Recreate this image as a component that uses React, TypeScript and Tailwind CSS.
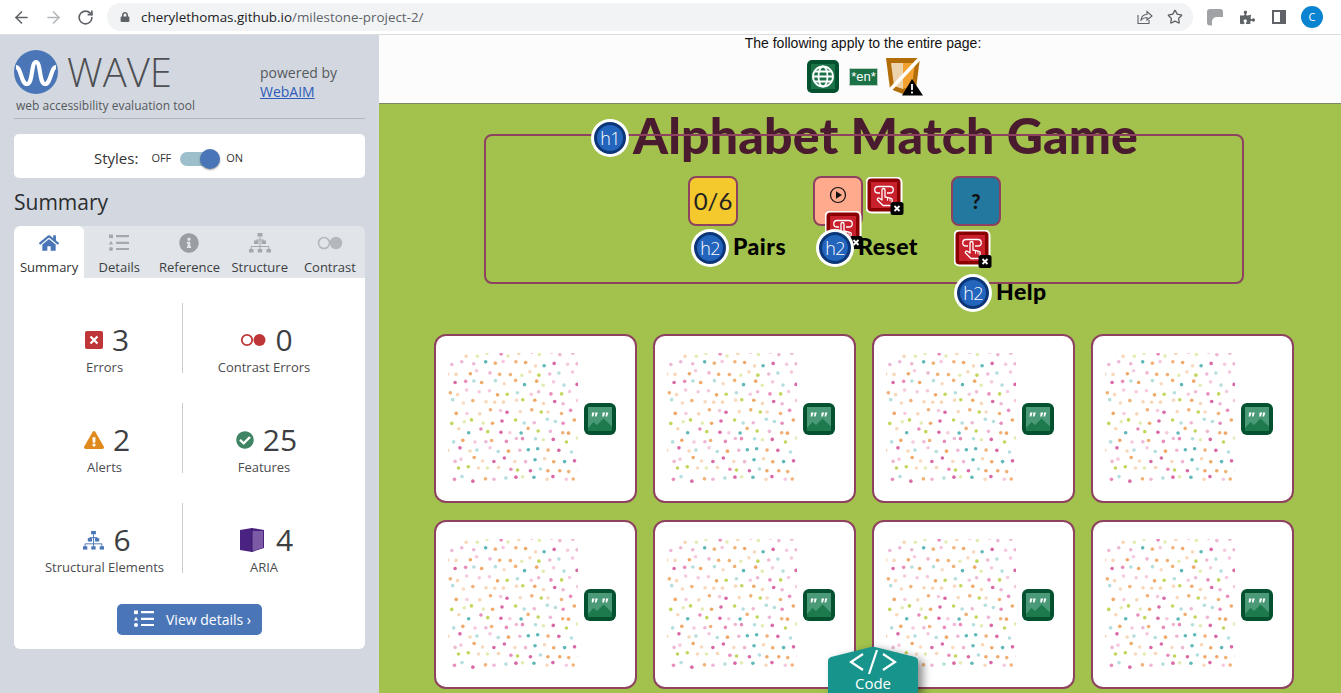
import React from 'react';
import { ArrowLeft, ArrowRight, RotateCw, Star } from 'lucide-react';
import { FaHome, FaInfoCircle, FaCheckCircle, FaExclamationTriangle, FaLock, FaPuzzlePiece } from 'react-icons/fa';

const dotColors = ['#d6569c', '#ee9f58', '#4fb0b0', '#bcd24a', '#e67fb5', '#f0a868'];

// fixed seed so every card gets the same speckle tile
const makeDots = () => {
  let seed = 987;
  const rand = () => {
    seed = (seed * 1103515245 + 12345) & 0x7fffffff;
    return seed / 0x7fffffff;
  };
  const dots: { x: number; y: number; c: string; o: number }[] = [];
  for (let row = 0; row < 14; row++) {
    for (let col = 0; col < 14; col++) {
      dots.push({
        x: col * 10.2 + (row % 2 ? 5.1 : 0) + rand() * 5 - 2.5,
        y: row * 9.6 + rand() * 5 - 1.5,
        c: dotColors[Math.floor(rand() * dotColors.length)],
        o: rand() > 0.55 ? 0.9 : 0.42,
      });
    }
  }
  return dots;
};
const dots = makeDots();

const Speckles = () => (
  <svg width="130" height="131" viewBox="0 0 130 131" className="shrink-0">
    {dots.map((d, i) => (
      <circle key={i} cx={d.x} cy={d.y} r="1.8" fill={d.c} opacity={d.o} />
    ))}
  </svg>
);

const ImageIcon = () => (
  <svg width="32" height="32" viewBox="0 0 32 32" className="shrink-0">
    <rect width="32" height="32" rx="6" fill="#04512f" />
    <rect x="4" y="4" width="24" height="24" fill="#4a9a78" />
    <path d="M4 25 L9.5 19 L13 22 L19.5 15.5 L28 23.5 V28 H4 Z" fill="#1d7a4c" />
    <path d="M8 9.5 h2.6 l-1.3 4 h-1.6 z M11.4 9.5 h2.4 l-1.3 4 h-1.5 z M18.6 9.5 h2.6 l-1.3 4 h-1.6 z M22 9.5 h2.4 l-1.3 4 h-1.5 z" fill="#fff" />
  </svg>
);

const ButtonIcon = ({ x = true }: { x?: boolean }) => (
  <svg width="38" height="38" viewBox="0 0 38 38" className="shrink-0">
    <rect x="0.5" y="0.5" width="35" height="35" rx="5" fill="#8a0000" stroke="#fff" strokeWidth="2" />
    <rect x="5" y="5" width="26" height="26" fill="#c8202c" />
    {/* stadium with the pointing hand in front of it */}
    <path d="M14 16 H12 A3.2 3.2 0 0 1 12 9.5 H24 A3.2 3.2 0 0 1 24 16 H21" fill="none" stroke="#fff" strokeWidth="1.3" />
    <path d="M16 13 a1.5 1.5 0 0 1 3 0 V20 l6 1.4 a1.5 1.5 0 0 1 1.2 1.6 l-0.7 5.5 H17 L11.5 23 a1.3 1.3 0 0 1 1.9-1.7 L16 23 Z" fill="#c8202c" stroke="#fff" strokeWidth="1.3" strokeLinejoin="round" />
    <path d="M21.5 20.8 v3 M24 21.3 v3" stroke="#fff" strokeWidth="0.9" />
    {x && (
      <g>
        <rect x="24.5" y="25" width="13" height="13" rx="2.5" fill="#000" />
        <path d="M28.5 29 l5 5 M33.5 29 l-5 5" stroke="#fff" strokeWidth="1.8" />
      </g>
    )}
  </svg>
);

const Badge = ({ label }: { label: string }) => (
  <div className="relative z-10 flex h-[38px] w-[38px] shrink-0 items-center justify-center rounded-full bg-white">
    <div className="flex h-[32px] w-[32px] items-center justify-center rounded-full border-[3px] border-[#0c3677] bg-[#2364bd] font-['Open_Sans',sans-serif] text-[18px] leading-none font-light tracking-[-0.8px] text-white">
      {label}
    </div>
  </div>
);

const Section = ({ label }: { label: string }) => (
  <div className="flex items-center gap-[4px]">
    <Badge label="h2" />
    <h2 className="mb-[4px] font-['Lato',sans-serif] text-[23px] leading-none font-black tracking-[0.5px] text-black">{label}</h2>
  </div>
);

const squareClass =
  "flex h-[50px] w-[50px] items-center justify-center rounded-[8px] border-2 border-[#8f4260]";

const DetailsGlyph = ({ color }: { color: string }) => (
  <svg width="20" height="18" viewBox="0 0 20 18">
    <rect x="0" y="0.5" width="4" height="3.6" fill={color} />
    <path d="M2 6.8 L4.2 10.6 H-0.2 Z" fill={color} />
    <circle cx="2" cy="15" r="2" fill={color} />
    <path d="M7 2.2 H20 M7 8.8 H20 M7 15 H20" stroke={color} strokeWidth="2.2" />
  </svg>
);

const TreeGlyph = ({ color, size = 22 }: { color: string; size?: number }) => (
  <svg width={size} height={size} viewBox="0 0 22 20">
    <rect x="8.5" y="0" width="5" height="3.5" fill={color} />
    <rect x="5" y="7.5" width="4.5" height="3.5" fill={color} />
    <rect x="12.5" y="7.5" width="4.5" height="3.5" fill={color} />
    <rect x="0" y="16" width="4.5" height="3.5" fill={color} />
    <rect x="8.7" y="16" width="4.5" height="3.5" fill={color} />
    <rect x="17.5" y="16" width="4.5" height="3.5" fill={color} />
    <path d="M11 3.5 V16 M7.2 11 V7 H14.8 V11 M2.2 16 V13.5 H19.8 V16" fill="none" stroke={color} strokeWidth="1" />
  </svg>
);

const tabs = [
  { label: 'Summary', icon: <FaHome size={20} color="#4a76b8" />, active: true },
  { label: 'Details', icon: <DetailsGlyph color="#a5a9ae" /> },
  { label: 'Reference', icon: <FaInfoCircle size={20} color="#9a9ea3" /> },
  { label: 'Structure', icon: <TreeGlyph color="#a5a9ae" /> },
  {
    label: 'Contrast',
    icon: (
      <svg width="26" height="14" viewBox="0 0 26 14">
        <circle cx="7" cy="7" r="5.5" fill="none" stroke="#b4b7bb" strokeWidth="1.6" />
        <circle cx="19" cy="7" r="6.2" fill="#b4b7bb" />
      </svg>
    ),
  },
];

const stats = [
  {
    value: '3',
    label: 'Errors',
    icon: (
      <svg width="18" height="18" viewBox="0 0 18 18">
        <rect width="18" height="18" rx="2" fill="#bf3638" />
        <path d="M5.5 5.5 l7 7 M12.5 5.5 l-7 7" stroke="#fff" strokeWidth="2.2" />
      </svg>
    ),
  },
  {
    value: '0',
    label: 'Contrast Errors',
    icon: (
      <svg width="26" height="14" viewBox="0 0 26 14">
        <circle cx="7" cy="7" r="5.2" fill="none" stroke="#bf3638" strokeWidth="1.8" />
        <circle cx="19.5" cy="7" r="6" fill="#bf3638" />
      </svg>
    ),
  },
  { value: '2', label: 'Alerts', icon: <FaExclamationTriangle size={20} color="#e08a1e" /> },
  { value: '25', label: 'Features', icon: <FaCheckCircle size={18} color="#3f8463" /> },
  { value: '6', label: 'Structural Elements', icon: <TreeGlyph color="#4a76b8" size={21} /> },
  {
    value: '4',
    label: 'ARIA',
    icon: (
      <svg width="24" height="24" viewBox="0 0 24 24" className="mr-[3px]">
        <path d="M0 2 L12 0 L24 2 V20 L12 24 L0 22 Z" fill="#4a2380" />
        <path d="M12 3 H23 V20 L12 23 Z" fill="#7c5aa6" />
        <path d="M12 0 V24" stroke="#3a1a68" strokeWidth="1" />
      </svg>
    ),
  },
];

const Toolbar = () => (
  <div className="flex h-[35px] items-center border-b border-[#dadce0] bg-white pl-[5px]">
    <div className="flex w-[32px] justify-center"><ArrowLeft size={19} color="#5f6368" /></div>
    <div className="flex w-[32px] justify-center"><ArrowRight size={19} color="#b4b7ba" /></div>
    <div className="flex w-[32px] justify-center"><RotateCw size={17} color="#5f6368" strokeWidth={2.4} /></div>
    <div className="ml-[6px] flex h-[28px] w-[1086px] items-center rounded-full bg-[#f1f3f4] pl-[13px] pr-[10px] font-['Open_Sans',sans-serif] text-[13.4px]">
      <FaLock size={10} color="#5f6368" />
      <span className="ml-[11px] text-[#202124]">
        cherylethomas.github.io<span className="text-[#5f6368]">/milestone-project-2/</span>
      </span>
      <svg width="18" height="18" viewBox="0 0 18 18" fill="none" stroke="#5f6368" strokeWidth="1.1" className="ml-auto mr-[14px]">
        <path d="M3 7 V15.5 H14 V12" />
        <path d="M6 12 C6.5 8.5 9 6.5 12 6.5 V3.5 L17 8 L12 12 V9.5 C9.5 9.5 7.5 10.5 6 12 Z" />
      </svg>
      <Star size={16} color="#5f6368" strokeWidth={2} />
    </div>
    <div className="ml-[6px] flex w-[32px] justify-center">
      <svg width="16" height="17" viewBox="0 0 16 17">
        <path d="M3 0 H13 Q16 0 16 3 V8 H10 Q6 8 5 12 V16.5 H3 Q0 16.5 0 13.5 V3 Q0 0 3 0 Z" fill="#a0a2a5" />
      </svg>
    </div>
    <div className="flex w-[32px] justify-center"><FaPuzzlePiece size={15} color="#5f6368" /></div>
    <div className="flex w-[32px] justify-center">
      <div className="flex h-[14px] w-[14px] justify-end border-2 border-[#5f6368]">
        <div className="h-full w-[4px] bg-[#5f6368]" />
      </div>
    </div>
    <div className="flex w-[34px] justify-center">
      <div className="flex h-[22px] w-[22px] items-center justify-center rounded-full bg-[#0a84d0] font-['Open_Sans',sans-serif] text-[11px] text-white">
        C
      </div>
    </div>
  </div>
);

const Sidebar = () => (
  <aside className="h-full w-[379px] shrink-0 bg-[#d3d8e0] px-[14px] pt-[15px] font-['Open_Sans',sans-serif]">
    <div className="flex h-[69px] items-start border-b border-[#b1b5bd]">
      <div className="w-[246px]">
        <div className="flex items-center">
          <svg width="44" height="44" viewBox="0 0 44 44">
            <circle cx="22" cy="22" r="22" fill="#4a76b8" />
            <path d="M2 17 C7 17 7 34 13 34 C19 34 17 12 22 12 C27 12 25 34 31 34 C37 34 37 17 42 17" fill="none" stroke="#fff" strokeWidth="4.2" />
          </svg>
          <span className="ml-[9px] text-[40px] leading-[44px] font-light text-[#4d4f53]">WAVE</span>
        </div>
        <div className="mt-[3px] ml-[2px] text-[12px] leading-[18px] whitespace-nowrap text-[#55585c]">web accessibility evaluation tool</div>
      </div>
      <div className="pt-[13px] text-[14px] leading-[19px] text-[#55585c]">
        powered by
        <br />
        <span className="text-[#2d5bb9] underline">WebAIM</span>
      </div>
    </div>
    <div className="mt-[15px] flex h-[44px] items-center rounded-[5px] bg-white pt-[5px] pl-[80px]">
      <span className="text-[15px] text-[#333]">Styles:</span>
      <span className="ml-[13px] text-[11px] text-[#333]">OFF</span>
      <div className="relative ml-[9px] h-[14px] w-[30px] rounded-full bg-[#9dbfcc]">
        <div className="absolute top-[-3px] right-[-10px] h-[20px] w-[20px] rounded-full bg-[#4a76b8] shadow-[0_1px_2px_rgba(0,0,0,0.4)]" />
      </div>
      <span className="ml-[16px] text-[11px] text-[#333]">ON</span>
    </div>
    <h2 className="mt-[9px] text-[21px] leading-[30px] text-[#2b2d30]">Summary</h2>
    <div className="mt-[9px] grid grid-cols-5 overflow-hidden rounded-t-[6px] bg-[#e1e4e9]">
      {tabs.map((t) => (
        <div
          key={t.label}
          className={
            t.active
              ? 'flex h-[52px] flex-col items-center rounded-t-[6px] bg-white pt-[7px] text-[13px] text-[#333]'
              : 'flex h-[52px] flex-col items-center pt-[7px] text-[13px] text-[#3b3e42]'
          }
        >
          <div className="flex h-[20px] items-center">{t.icon}</div>
          <div className="mt-[5px] leading-[18px]">{t.label}</div>
        </div>
      ))}
    </div>
    <div className="h-[371px] rounded-b-[6px] bg-white pt-[25px] pl-[13px]">
      <div className="grid grid-cols-[156px_162px] gap-y-[30px]">
        {stats.map((s, i) => (
          <div
            key={s.label}
            className={
              i % 2 === 0
                ? 'flex h-[70px] flex-col items-center border-r border-[#c9cbce] pt-[22px]'
                : 'flex h-[70px] flex-col items-center pt-[22px]'
            }
          >
            <div className="flex h-[36px] items-center gap-[9px] pl-[5px] text-[30px] leading-none text-[#3d3f43]">
              {s.icon}
              <span>{s.value}</span>
            </div>
            <div className="mt-[3px] whitespace-nowrap text-[13px] leading-[18px] text-[#4a4c50]">{s.label}</div>
          </div>
        ))}
      </div>
      <div className="mt-[31px] ml-[90px] flex h-[31px] w-[145px] items-center rounded-[5px] bg-[#4a76b8] pb-[1px] pl-[17px] text-[14px] text-white">
        <DetailsGlyph color="#fff" />
        <span className="ml-[12px]">View details ›</span>
      </div>
    </div>
  </aside>
);

const Card = () => (
  <div className="flex h-[169px] items-center gap-[6px] rounded-[12px] border-2 border-[#8f4260] bg-white pl-3">
    <Speckles />
    <ImageIcon />
  </div>
);

const App: React.FC = () => {
  return (
    <div className="flex h-[693px] w-[1341px] flex-col overflow-hidden">
      <Toolbar />
      <div className="relative flex min-h-0 flex-1">
        <Sidebar />
        <main className="min-w-0 flex-1 bg-[#a2c14d]">
          <div className="flex h-[69px] flex-col items-center border-b border-[#7d8a6a] bg-[#fcfcfc] pl-[6px]">
            <div className="-mt-[1px] font-['Liberation_Sans',sans-serif] text-[14px] leading-[18px] text-[#111]">The following apply to the entire page:</div>
            <div className="mt-[5px] ml-[4px] flex items-center">
              <svg width="32" height="33" viewBox="0 0 32 33">
                <rect width="32" height="33" rx="5" fill="#04512f" />
                <rect x="4" y="4" width="24" height="25" fill="#1c7247" />
                <g fill="none" stroke="#fff" strokeWidth="1.8">
                  <circle cx="16" cy="16.5" r="10" />
                  <ellipse cx="16" cy="16.5" rx="4.5" ry="10" />
                  <path d="M6 16.5 H26 M7.5 11.5 H24.5 M7.5 21.5 H24.5" />
                </g>
              </svg>
              <div className="ml-[10px] flex h-[18px] w-[29px] items-center justify-center border border-[#bcd0c4] bg-[#1c7247] font-['Liberation_Sans',sans-serif] text-[13px] leading-none text-white">
                *en*
              </div>
              <svg width="38" height="39" viewBox="0 0 38 39" className="ml-[7px]">
                <path d="M1 1 H35 L31 32 L18 37 L5 32 Z" fill="#b36d08" />
                <path d="M6 6 H18 V32 L9 29 Z" fill="#ecd2ad" />
                <path d="M18 6 H30 L27 29 L18 32 Z" fill="#f2a02e" />
                <path d="M5 33 L35 1" stroke="#fff" strokeWidth="3.5" />
                <path d="M27 22 L38 38.5 H17 Z" fill="#000" />
                <path d="M27 27 V33 M27 34.5 V36.5" stroke="#fff" strokeWidth="1.8" />
              </svg>
            </div>
          </div>

          <div className="relative mx-[105px] mt-[30px] h-[150px] w-[760px]">
            <h1 className="absolute top-[-18px] left-[107px] flex items-center gap-[4px] whitespace-nowrap font-['Lato',sans-serif] text-[50px] leading-[38px] font-black tracking-[0.15px] text-[#4a1a2e]">
              <Badge label="h1" />
              <span className="mb-[6px]">Alphabet Match Game</span>
            </h1>
            <div className="pointer-events-none absolute inset-0 rounded-[8px] border-2 border-[#8f4260]" />
            <div className="flex pt-[42px] pl-[204px] font-['Lato',sans-serif]">
              <div className="w-[125px]">
                <div className={`${squareClass} bg-[#f4c92e] text-[24px] text-[#222]`}>0/6</div>
                <div className="mt-[3px] ml-[3px]"><Section label="Pairs" /></div>
              </div>
              <div className="relative w-[138px]">
                <div className={`${squareClass} bg-[#ffaa8c]`}>
                  <svg width="18" height="18" viewBox="0 0 18 18" className="mb-[12px]">
                    <circle cx="9" cy="9" r="7.5" fill="none" stroke="#111" strokeWidth="1.2" />
                    <path d="M7 5.2 L13 9 L7 12.8 Z" fill="#111" />
                  </svg>
                </div>
                <div className="absolute top-[1px] left-[53px]"><ButtonIcon /></div>
                <div className="absolute top-[35px] left-[12px]"><ButtonIcon /></div>
                <div className="relative mt-[3px] ml-[3px]"><Section label="Reset" /></div>
              </div>
              <div>
                <div className={`${squareClass} bg-[#22789f] text-[20px] font-black text-[#111]`}>?</div>
                <div className="mt-[4px] ml-[3px]"><ButtonIcon /></div>
                <div className="mt-[6px] ml-[3px]"><Section label="Help" /></div>
              </div>
            </div>
          </div>

          <div className="mt-[50px] ml-[55px] grid w-[860px] grid-cols-4 gap-x-4 gap-y-[17px]">
            {Array.from({ length: 8 }).map((_, i) => (
              <Card key={i} />
            ))}
          </div>
        </main>

        {/* Code tab floats over the cards */}
        <div className="absolute bottom-0 left-[828px] h-[46px] w-[90px] font-['Open_Sans',sans-serif] text-white">
          <svg width="90" height="46" viewBox="0 0 90 46" className="absolute inset-0 drop-shadow-[5px_3px_4px_rgba(0,0,0,0.45)]">
            <path d="M0 46 V14 Q0 11 3 10 L43 0 Q45 -0.5 47 0 L87 10 Q90 11 90 14 V46 Z" fill="#17948c" />
          </svg>
          <div className="relative flex flex-col items-center">
            <svg width="48" height="26" viewBox="0 0 48 26" fill="none" stroke="#fff" strokeWidth="2.2" className="mt-[2px]">
              <path d="M14 5 L2 13 L14 21 M34 5 L46 13 L34 21 M28 1 L20 25" />
            </svg>
            <span className="text-[15px] leading-[16px]">Code</span>
          </div>
        </div>
      </div>
    </div>
  );
};

export default App;
